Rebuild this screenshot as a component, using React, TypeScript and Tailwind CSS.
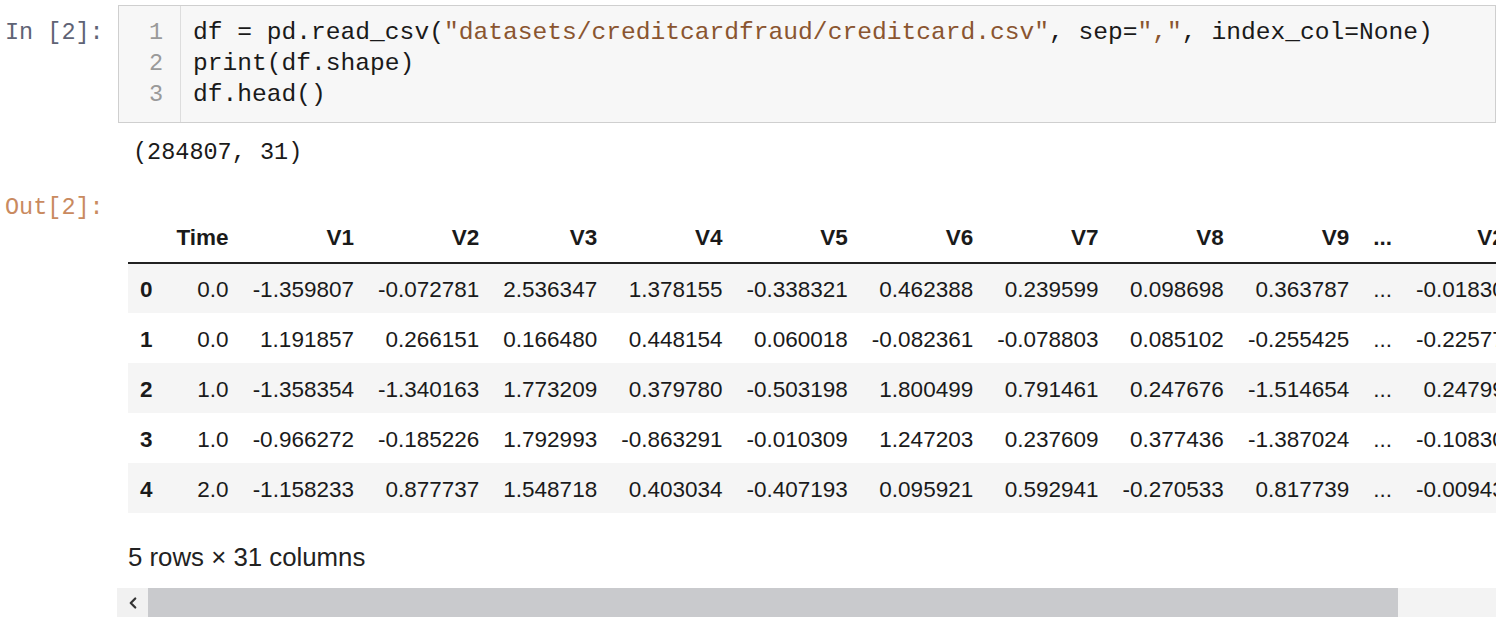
import { ChevronLeft } from "lucide-react";

const columns = ["Time", "V1", "V2", "V3", "V4", "V5", "V6", "V7", "V8", "V9", "...", "V21"];

const rows = [
  ["0.0", "-1.359807", "-0.072781", "2.536347", "1.378155", "-0.338321", "0.462388", "0.239599", "0.098698", "0.363787", "...", "-0.018307"],
  ["0.0", "1.191857", "0.266151", "0.166480", "0.448154", "0.060018", "-0.082361", "-0.078803", "0.085102", "-0.255425", "...", "-0.225775"],
  ["1.0", "-1.358354", "-1.340163", "1.773209", "0.379780", "-0.503198", "1.800499", "0.791461", "0.247676", "-1.514654", "...", "0.247998"],
  ["1.0", "-0.966272", "-0.185226", "1.792993", "-0.863291", "-0.010309", "1.247203", "0.237609", "0.377436", "-1.387024", "...", "-0.108300"],
  ["2.0", "-1.158233", "0.877737", "1.548718", "0.403034", "-0.407193", "0.095921", "0.592941", "-0.270533", "0.817739", "...", "-0.009431"],
];

const mono = "font-['Liberation_Mono',monospace]";

export default function App() {
  return (
    <div className="h-[623px] w-[1500px] overflow-hidden bg-white pt-[5px] text-[#111]">
      {/* input cell */}
      <div className="flex">
        <div className={`w-[118px] shrink-0 pl-[5px] pt-[12px] text-[23.5px] leading-[31px] text-[#5f6375] ${mono}`}>
          In&nbsp;[2]:
        </div>
        <div className="flex w-[1378px] border border-[#cfcfcf] bg-[#f7f7f7]">
          <div className={`w-[62px] border-r border-[#dddddd] pb-[12px] pr-[17px] pt-[11px] text-right text-[23.5px] leading-[31px] text-[#9a9a9a] ${mono}`}>
            <div>1</div>
            <div>2</div>
            <div>3</div>
          </div>
          <div className={`pb-[12px] pl-[12px] pt-[11px] text-[24.6px] leading-[31px] text-[#1a1a1a] ${mono} whitespace-pre`}>
            <div>
              df = pd.read_csv(<span className="text-[#8a5530]">"datasets/creditcardfraud/creditcard.csv"</span>, sep=
              <span className="text-[#8a5530]">","</span>, index_col=None)
            </div>
            <div>print(df.shape)</div>
            <div>df.head()</div>
          </div>
        </div>
      </div>

      {/* stdout */}
      <div className={`mt-[15px] pl-[133px] text-[23.5px] leading-[30px] text-[#1a1a1a] ${mono} whitespace-pre`}>
        (284807, 31)
      </div>

      {/* output */}
      <div className="mt-[25px] flex">
        <div className={`w-[117px] shrink-0 pl-[5px] text-[23.5px] leading-[30px] text-[#c98a5f] ${mono}`}>
          Out[2]:
        </div>
        <div className="w-[1379px] overflow-hidden font-['Liberation_Sans',Arial,sans-serif] text-[22.5px] text-[#1a1a1a]">
          <div className="mt-[20px] pl-[11px]">
            <table className="w-max border-collapse whitespace-nowrap">
              <thead>
                <tr className="h-[50px] border-b-2 border-[#222]">
                  <th className="px-3" />
                  {columns.map((c) => (
                    <th key={c} className="px-3 text-right font-bold">
                      {c}
                    </th>
                  ))}
                </tr>
              </thead>
              <tbody>
                {rows.map((r, i) => (
                  <tr key={i} className={`h-[50px] ${i % 2 === 0 ? "bg-[#f5f5f5]" : "bg-white"}`}>
                    <th className="px-3 pt-[3px] text-right font-bold">{i}</th>
                    {r.map((v, j) => (
                      <td key={j} className="px-3 pt-[3px] text-right">
                        {v}
                      </td>
                    ))}
                  </tr>
                ))}
              </tbody>
            </table>
          </div>
          <div className="mt-[29px] pl-[11px] text-[25.8px] leading-[30px] text-[#222]">5 rows × 31 columns</div>
          <div className="mt-[16px] flex h-[29px]">
            <div className="flex w-[31px] items-center justify-center bg-[#f1f1f1]">
              <ChevronLeft size={18} strokeWidth={3} className="text-[#333]" />
            </div>
            <div className="w-[1250px] bg-[#c9cacd]" />
            <div className="flex-1 bg-[#f3f3f3]" />
          </div>
        </div>
      </div>
    </div>
  );
}
